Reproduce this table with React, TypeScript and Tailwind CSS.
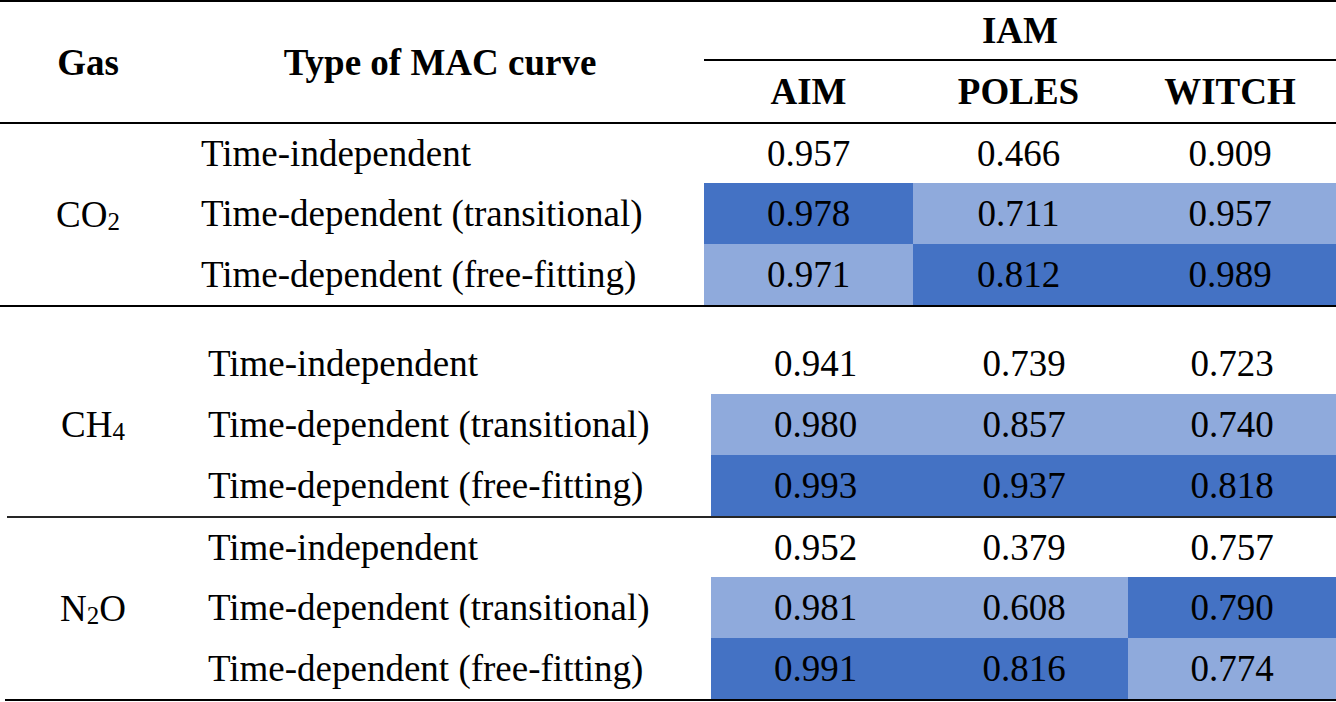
type Shade = 'none' | 'light' | 'dark';

type Row = { type: string; values: [string, string, string]; shades: [Shade, Shade, Shade] };

type Group = {
  gas: React.ReactNode;
  rows: Row[];
  inset: boolean;
};

const shadeClass: Record<Shade, string> = {
  none: '',
  light: 'bg-[#8faadc]',
  dark: 'bg-[#4472c4]',
};

const groups: Group[] = [
  {
    gas: (
      <>
        CO<span className="align-[-3px] text-[25px]">2</span>
      </>
    ),
    inset: false,
    rows: [
      { type: 'Time-independent', values: ['0.957', '0.466', '0.909'], shades: ['none', 'none', 'none'] },
      { type: 'Time-dependent (transitional)', values: ['0.978', '0.711', '0.957'], shades: ['dark', 'light', 'light'] },
      { type: 'Time-dependent (free-fitting)', values: ['0.971', '0.812', '0.989'], shades: ['light', 'dark', 'dark'] },
    ],
  },
  {
    gas: (
      <>
        CH<span className="align-[-3px] text-[25px]">4</span>
      </>
    ),
    inset: true,
    rows: [
      { type: 'Time-independent', values: ['0.941', '0.739', '0.723'], shades: ['none', 'none', 'none'] },
      { type: 'Time-dependent (transitional)', values: ['0.980', '0.857', '0.740'], shades: ['light', 'light', 'light'] },
      { type: 'Time-dependent (free-fitting)', values: ['0.993', '0.937', '0.818'], shades: ['dark', 'dark', 'dark'] },
    ],
  },
  {
    gas: (
      <>
        N<span className="align-[-3px] text-[25px]">2</span>O
      </>
    ),
    inset: true,
    rows: [
      { type: 'Time-independent', values: ['0.952', '0.379', '0.757'], shades: ['none', 'none', 'none'] },
      { type: 'Time-dependent (transitional)', values: ['0.981', '0.608', '0.790'], shades: ['light', 'light', 'dark'] },
      { type: 'Time-dependent (free-fitting)', values: ['0.991', '0.816', '0.774'], shades: ['dark', 'dark', 'light'] },
    ],
  },
];

const rowHeights = ['h-[59px]', 'h-[61px]', 'h-[61px]'];

function GroupBlock({ group, index }: { group: Group; index: number }) {
  const colWidths = group.inset
    ? ['w-[209px]', 'w-[208px]', 'w-[208px]']
    : ['w-[209px]', 'w-[211px]', 'w-[212px]'];
  const heights = index === 1 ? ['h-[61px]', 'h-[61px]', 'h-[61px]'] : rowHeights;

  return (
    <div className={`flex ${index === 1 ? 'pt-[26px]' : ''}`}>
      <div className={`flex items-center justify-center ${group.inset ? 'w-[186px]' : 'w-[176px]'}`}>
        <span className="whitespace-nowrap">{group.gas}</span>
      </div>
      <div className="flex flex-1 flex-col">
        {group.rows.map((row, r) => (
          <div key={row.type} className={`flex ${heights[r]}`}>
            <div className={`flex flex-1 items-center whitespace-nowrap ${group.inset ? 'pl-[22px]' : 'pl-[25px]'}`}>
              {row.type}
            </div>
            {row.values.map((v, c) => (
              <div
                key={c}
                className={`flex items-center justify-center ${colWidths[c]} ${shadeClass[row.shades[c]]}`}
              >
                {v}
              </div>
            ))}
          </div>
        ))}
      </div>
    </div>
  );
}

export default function App() {
  return (
    <div className="h-[702px] w-[1336px] overflow-hidden bg-white font-['Liberation_Serif',serif] text-[37px] leading-none text-black">
      <div className="flex h-[124px] border-y-2 border-black font-bold">
        <div className="flex w-[176px] items-center justify-center">Gas</div>
        <div className="flex flex-1 items-center justify-center">Type of MAC curve</div>
        <div className="flex w-[632px] flex-col">
          <div className="flex h-[59px] items-center justify-center border-b-2 border-black">IAM</div>
          <div className="flex flex-1">
            <div className="flex w-[209px] items-center justify-center">AIM</div>
            <div className="flex w-[211px] items-center justify-center">POLES</div>
            <div className="flex w-[212px] items-center justify-center">WITCH</div>
          </div>
        </div>
      </div>

      <div className="border-b-2 border-black">
        <GroupBlock group={groups[0]} index={0} />
      </div>
      <div className="ml-[7px] border-b-2 border-[#262626]">
        <div className="-ml-[7px]">
          <GroupBlock group={groups[1]} index={1} />
        </div>
      </div>
      <div className="ml-[5px] border-b-2 border-black">
        <div className="-ml-[5px]">
          <GroupBlock group={groups[2]} index={2} />
        </div>
      </div>
    </div>
  );
}
